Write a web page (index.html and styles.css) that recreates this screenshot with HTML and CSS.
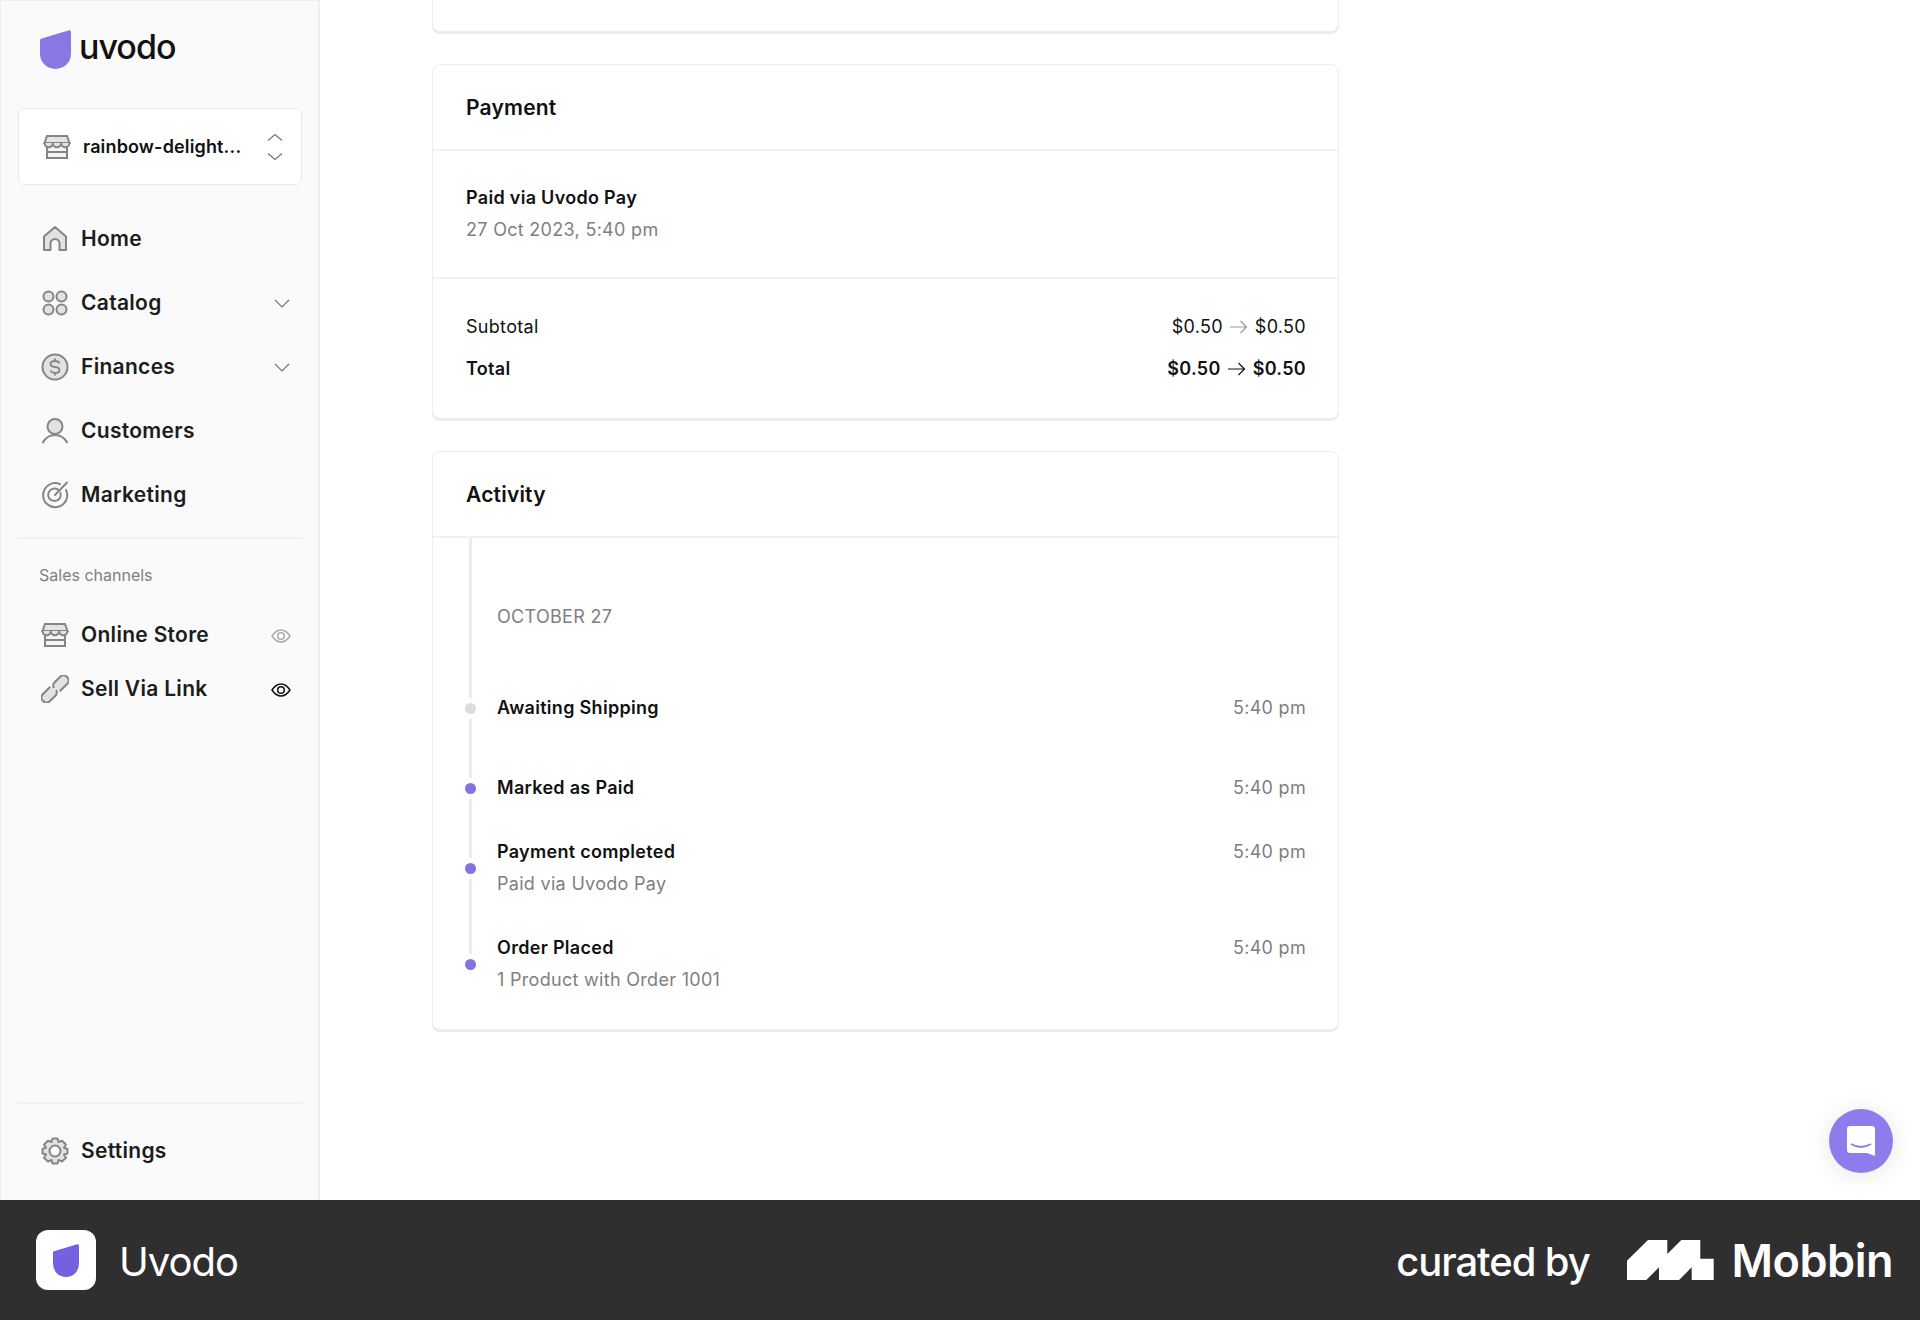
FILE: index.html
```html
<!DOCTYPE html>
<html>
    <head>
        <title>Uvodo</title>
        <link rel="stylesheet" href="styles.css">
    </head>

    <body>
        <div class="app">
            <aside class="sidebar">
                <div class="brand">
                    <svg class="brand-mark" viewBox="0 0 31 39"><path d="M0 10Q0 9 1 8.7L29 .2Q31-.2 31 2V24A15.5 15 0 0 1 0 24Z" fill="#8a78e2"/></svg>
                    <span class="brand-name">uvodo</span>
                </div>

                <div class="store-picker">
                    <svg class="icon" viewBox="0 0 28 28"><use href="#i-store"/></svg>
                    <span class="store-name">rainbow-delight...</span>
                    <svg class="updown" viewBox="0 0 16 28"><path d="M1 7.5L8 1.5L15 7.5M1 20.500L8 26.500L15 20.500" fill="none" stroke="#777" stroke-width="1.300"/></svg>
                </div>

                <ul class="nav">
                    <li class="nav-item"><svg class="icon" viewBox="0 0 28 28"><use href="#i-home"/></svg><span>Home</span></li>
                    <li class="nav-item"><svg class="icon" viewBox="0 0 28 28"><use href="#i-grid"/></svg><span>Catalog</span><svg class="chev" viewBox="0 0 16 9"><use href="#i-chev"/></svg></li>
                    <li class="nav-item"><svg class="icon" viewBox="0 0 28 28"><use href="#i-dollar"/></svg><span>Finances</span><svg class="chev" viewBox="0 0 16 9"><use href="#i-chev"/></svg></li>
                    <li class="nav-item"><svg class="icon" viewBox="0 0 28 28"><use href="#i-user"/></svg><span>Customers</span></li>
                    <li class="nav-item"><svg class="icon" viewBox="0 0 28 28"><use href="#i-target"/></svg><span>Marketing</span></li>
                </ul>

                <div class="rule"></div>
                <div class="nav-label">Sales channels</div>

                <ul class="nav channels">
                    <li class="nav-item"><svg class="icon" viewBox="0 0 28 28"><use href="#i-store"/></svg><span>Online Store</span><svg class="eye eye-off" viewBox="0 0 20 14"><use href="#i-eye"/></svg></li>
                    <li class="nav-item"><svg class="icon" viewBox="0 0 28 28"><use href="#i-link"/></svg><span>Sell Via Link</span><svg class="eye" viewBox="0 0 20 14"><use href="#i-eye"/></svg></li>
                </ul>

                <div class="sidebar-bottom">
                    <div class="rule"></div>
                    <div class="nav-item settings"><svg class="icon" viewBox="0 0 28 28"><use href="#i-gear"/></svg><span>Settings</span></div>
                </div>
            </aside>

            <main class="main">
                <div class="content">
                    <div class="card card-cut"></div>

                    <section class="card">
                        <h2 class="card-title">Payment</h2>
                        <div class="paid">
                            <div class="strong">Paid via Uvodo Pay</div>
                            <div class="muted">27 Oct 2023, 5:40 pm</div>
                        </div>
                        <div class="totals">
                            <div class="total-row">
                                <span>Subtotal</span>
                                <span class="amounts">$0.50<svg class="arrow arrow-soft" viewBox="0 0 18 14"><use href="#i-arrow"/></svg>$0.50</span>
                            </div>
                            <div class="total-row strong">
                                <span>Total</span>
                                <span class="amounts">$0.50<svg class="arrow" viewBox="0 0 18 14"><use href="#i-arrow"/></svg>$0.50</span>
                            </div>
                        </div>
                    </section>

                    <section class="card">
                        <h2 class="card-title">Activity</h2>
                        <div class="timeline">
                            <div class="day">OCTOBER 27</div>
                            <div class="event event-wide">
                                <i class="dot dot-grey"></i>
                                <div class="strong">Awaiting Shipping</div>
                                <span class="muted">5:40 pm</span>
                            </div>
                            <div class="event">
                                <i class="dot"></i>
                                <div class="strong">Marked as Paid</div>
                                <span class="muted">5:40 pm</span>
                            </div>
                            <div class="event">
                                <i class="dot"></i>
                                <div>
                                    <div class="strong">Payment completed</div>
                                    <div class="muted">Paid via Uvodo Pay</div>
                                </div>
                                <span class="muted">5:40 pm</span>
                            </div>
                            <div class="event">
                                <i class="dot"></i>
                                <div>
                                    <div class="strong">Order Placed</div>
                                    <div class="muted">1 Product with Order 1001</div>
                                </div>
                                <span class="muted">5:40 pm</span>
                            </div>
                        </div>
                    </section>
                </div>

                <div class="chat">
                    <svg viewBox="0 0 28 32" width="28" height="32"><path d="M3 1H25Q28 1 28 4V31L20 28H3Q0 28 0 25V4Q0 1 3 1Z" fill="#fff"/><path d="M4 19Q14 25 24 19" fill="none" stroke="#8d7cec" stroke-width="1.800"/></svg>
                </div>
            </main>
        </div>

        <footer class="footer">
            <div class="footer-app">
                <div class="app-tile">
                    <svg viewBox="0 0 26 33" width="26" height="33"><path d="M0 8.500Q0 7.500 1 7.200L24 .3Q26-.2 26 2V20A13 13 0 0 1 0 20Z" fill="#7461e0"/></svg>
                </div>
                <span class="app-name">Uvodo</span>
            </div>
            <div class="footer-credit">
                <span class="curated">curated by</span>
                <svg class="mobbin-mark" viewBox="0 0 87 40"><path d="M0 20.700L21 0H40.300V14L54.300 0H73.300V18.700H86.700V40H64.700V27.300L52 40H32V27.300L19.300 40H0Z" fill="#fff"/></svg>
                <span class="mobbin">Mobbin</span>
            </div>
        </footer>

        <svg class="sprites">
            <defs>
                <g id="i-store" fill="none" stroke="#858585" stroke-width="2">
                    <path d="M4 12V25H24V12" fill="#f4f4f4"/>
                    <path d="M4 3H24L26.500 10H1.500Z" fill="#e4e4e4"/>
                    <path d="M1.500 10A4.100 4.100 0 0 0 9.800 10A4.100 4.100 0 0 0 18.200 10A4.100 4.100 0 0 0 26.500 10" fill="#e4e4e4"/>
                    <path d="M4 19H24"/>
                </g>
                <g id="i-home" fill="#e2e2e2" stroke="#858585" stroke-width="2" stroke-linejoin="round">
                    <path d="M3 25V11.500L14 2L25 11.500V25H18.500V18.500A4.500 4.500 0 0 0 9.500 18.500V25Z"/>
                </g>
                <g id="i-grid" fill="#e2e2e2" stroke="#858585" stroke-width="2">
                    <circle cx="7.500" cy="7.500" r="5"/><circle cx="20.500" cy="7.500" r="5"/>
                    <circle cx="7.500" cy="20.500" r="5"/><circle cx="20.500" cy="20.500" r="5"/>
                </g>
                <g id="i-dollar" stroke="#858585" stroke-width="2" fill="none">
                    <circle cx="14" cy="14" r="12.500" fill="#e2e2e2"/>
                    <path d="M18.500 10.500Q17.500 8 14 8Q9.500 8 9.500 11Q9.500 13.500 14 14Q18.500 14.500 18.500 17Q18.500 20 14 20Q10.500 20 9.500 17.500M14 5.500V8M14 20V22.500" stroke-width="1.800"/>
                </g>
                <g id="i-user" stroke="#858585" stroke-width="2" fill="none">
                    <circle cx="14" cy="9.500" r="7.500" fill="#e2e2e2"/>
                    <path d="M1.500 26Q6 18 14 18Q22 18 26.500 26"/>
                </g>
                <g id="i-target" stroke="#858585" stroke-width="2" fill="none" stroke-linecap="round">
                    <path d="M19 3.200A12 12 0 1 0 25 9" />
                    <path d="M17 8.600A6.300 6.300 0 1 0 19.500 12"/>
                    <path d="M14 14L26 1.500"/>
                </g>
                <g id="i-link" stroke="#858585" stroke-width="2" fill="none" stroke-linecap="round" transform="rotate(-45 14 14)">
                    <path d="M11.500 9H2A5 5 0 0 0 2 19H9.500A5 5 0 0 0 14 16" fill="#e2e2e2"/>
                    <path d="M16.500 19H26A5 5 0 0 0 26 9H18.500A5 5 0 0 0 14 12" fill="#e2e2e2"/>
                </g>
                <g id="i-gear" stroke="#858585" stroke-width="2" fill="none" stroke-linejoin="round">
                    <path d="M11.500 1.500H16.500L17.500 5L21 3.700L25 7.500L23 10.800L26.500 12V16.500L23 17.500L25 20.800L21 24.500L17.500 23L16.500 26.500H11.500L10.500 23L7 24.500L3 20.800L5 17.500L1.500 16.500V12L5 10.800L3 7.500L7 3.700L10.500 5Z" fill="#e2e2e2"/>
                    <circle cx="14" cy="14" r="5.500" fill="#fafafa"/>
                </g>
                <path id="i-chev" d="M1 1L8 8L15 1" fill="none" stroke="#777" stroke-width="1.200"/>
                <g id="i-eye" fill="none" stroke="currentColor" stroke-width="1.500">
                    <path d="M1 7Q5 1 10 1Q15 1 19 7Q15 13 10 13Q5 13 1 7Z"/>
                    <circle cx="10" cy="7" r="3.300"/>
                </g>
                <path id="i-arrow" d="M0 7H16M10.500 1L16.500 7L10.500 13" fill="none" stroke="currentColor" stroke-width="1.200"/>
            </defs>
        </svg>
    </body>
</html>
```

FILE: styles.css
```css
*{
    box-sizing: border-box;
}

html, body{
    margin: 0;
    padding: 0;
}

body{
    width: 1920px;
    height: 1320px;
    overflow: hidden;
    background: #fff;
    color: #111;
    font-family: Inter, "Liberation Sans", sans-serif;
    font-size: 18px;
    letter-spacing: 0.3px;
    line-height: 32px;
}

ul{
    list-style: none;
    margin: 0;
    padding: 0;
}

.sprites{
    position: absolute;
    width: 0;
    height: 0;
}

.app{
    display: flex;
    height: 1200px;
}

/* sidebar */
.sidebar{
    width: 320px;
    flex: none;
    display: flex;
    flex-direction: column;
    padding: 0 16px 0 17px;
    background: #fafafa;
    border: 1px solid #eee;
    border-width: 1px 2px 0 1px;
}

.brand{
    display: flex;
    align-items: center;
    height: 107px;
    padding: 0 0 11px 22px;
}

.brand-mark{
    width: 31px;
    height: 39px;
}

.brand-name{
    margin-left: 8px;
    margin-bottom: 4px;
    font-size: 34px;
    font-weight: 500;
    letter-spacing: -1px;
    line-height: 40px;
}

.store-picker{
    display: flex;
    align-items: center;
    height: 77px;
    padding: 0 18px 0 24px;
    background: #fff;
    border: 1px solid #e9e9e9;
    border-radius: 6px;
}

.store-picker .icon{
    margin-right: 12px;
}

.store-name{
    flex: 1;
    font-size: 18px;
    font-weight: 600;
    letter-spacing: 0.15px;
}

.updown{
    width: 16px;
    height: 28px;
}

.icon{
    width: 28px;
    height: 28px;
    flex: none;
}

.nav{
    margin-top: 22px;
}

.nav-item{
    display: flex;
    align-items: center;
    height: 64px;
    padding: 0 12px 0 23px;
    font-size: 21px;
    font-weight: 600;
    letter-spacing: 0.3px;
    color: #1c1c1c;
}

.nav-item .icon{
    margin-right: 12px;
}

.nav-item span{
    flex: 1;
}

.chev{
    width: 16px;
    height: 9px;
}

.eye{
    width: 20px;
    height: 14px;
    margin-top: 2px;
    color: #111;
}

.eye-off{
    color: #aaa;
}

.rule{
    height: 2px;
    background: #f0f0f0;
}

.sidebar .rule{
    margin: 10px -1px 0;
}

.nav-label{
    margin: 20px 0 0 21px;
    font-size: 16px;
    font-weight: 400;
    letter-spacing: 0;
    color: #808080;
}

.channels{
    margin-top: 17px;
}

.channels .nav-item{
    height: 54px;
    padding-right: 11px;
}

.sidebar-bottom{
    margin-top: auto;
}

.sidebar-bottom .rule{
    margin: 0 -1px;
}

.settings{
    height: 96px;
    padding-bottom: 3px;
}

/* main */
.main{
    flex: 1;
    position: relative;
    padding-left: 112px;
}

.content{
    width: 907px;
    display: flex;
    flex-direction: column;
    gap: 32px;
}

.card{
    background: #fff;
    border: 1px solid #eee;
    border-radius: 8px;
    box-shadow: 0 2px 0 #ebebeb;
}

.card-cut{
    height: 32px;
    border-top: 0;
    border-radius: 0 0 8px 8px;
}

.card-title{
    margin: 0;
    padding: 0 32px 0 33px;
    height: 86px;
    line-height: 86px;
    font-size: 21px;
    font-weight: 600;
    letter-spacing: 0.2px;
    border-bottom: 2px solid #f1f1f1;
}

.strong{
    font-weight: 600;
}

.muted{
    color: #808080;
}

.paid{
    padding: 31px 32px 31px 33px;
    border-bottom: 2px solid #f1f1f1;
}

.totals{
    padding: 27px 32px 28px 33px;
}

.total-row{
    display: flex;
    justify-content: space-between;
    height: 42px;
    line-height: 42px;
}

.amounts{
    display: flex;
    align-items: center;
}

.arrow{
    width: 18px;
    height: 14px;
    margin: 0 7px;
}

.arrow-soft{
    color: #999;
}

/* activity */
.timeline{
    position: relative;
    margin-left: 32px;
    padding: 0 32px 33px 32px;
}

.timeline::before{
    content: "";
    position: absolute;
    left: 4px;
    top: 0;
    bottom: 66px;
    width: 3px;
    background: #ececec;
}

.day{
    padding-top: 63px;
    height: 154px;
    color: #808080;
}

.event{
    position: relative;
    display: flex;
    justify-content: space-between;
    margin-bottom: 32px;
}

.event:last-child{
    margin-bottom: 0;
}

.event-wide{
    margin-bottom: 48px;
}

.dot{
    position: absolute;
    left: -32px;
    top: 50%;
    width: 11px;
    height: 11px;
    margin-top: -5px;
    border-radius: 50%;
    background: #8672de;
    box-shadow: 0 0 0 5px #fff;
}

.dot-grey{
    background: #dcdcdc;
}

.chat{
    position: absolute;
    right: 27px;
    bottom: 27px;
    width: 64px;
    height: 64px;
    display: flex;
    align-items: center;
    justify-content: center;
    border-radius: 50%;
    background: #8d7cec;
    box-shadow: 0 2px 24px rgba(0, 0, 0, 0.1);
}

/* footer */
.footer{
    display: flex;
    align-items: center;
    justify-content: space-between;
    height: 120px;
    padding: 0 27px 0 36px;
    background: #2f2f2f;
    color: #fff;
}

.footer-app, .footer-credit{
    display: flex;
    align-items: center;
}

.app-tile{
    display: flex;
    align-items: center;
    justify-content: center;
    width: 60px;
    height: 60px;
    margin-right: 23px;
    background: #fff;
    border-radius: 12px;
}

.app-name{
    padding-top: 4px;
    font-size: 40px;
    font-weight: 400;
    letter-spacing: -1px;
    line-height: 48px;
}

.curated{
    padding-top: 4px;
    font-size: 40px;
    font-weight: 500;
    letter-spacing: -1.100px;
    line-height: 48px;
}

.mobbin-mark{
    width: 87px;
    height: 40px;
    margin: 0 18px 0 37px;
}

.mobbin{
    padding-top: 2px;
    font-size: 45px;
    font-weight: 600;
    letter-spacing: -0.500px;
    line-height: 48px;
}
```
